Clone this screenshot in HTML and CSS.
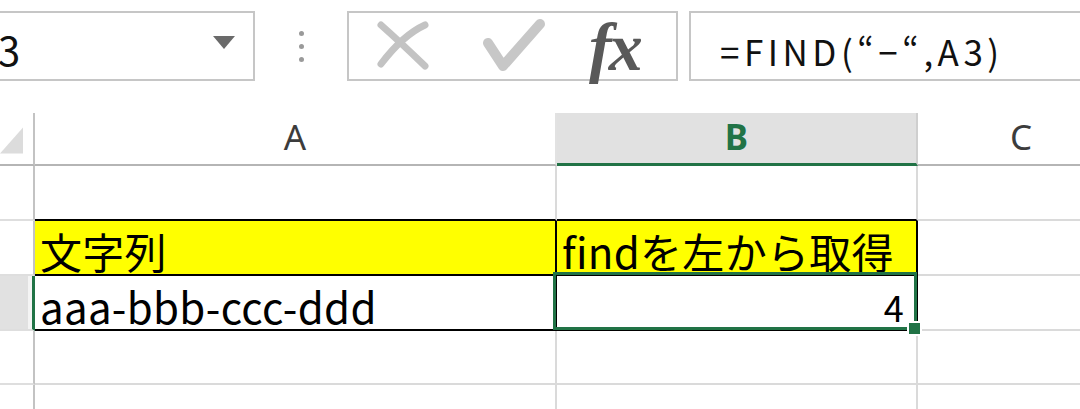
FILE: index.html
```html
<!DOCTYPE html>
<html lang="ja">
<head>
<meta charset="utf-8">
<title>FIND</title>
<link rel="stylesheet" href="styles.css">
</head>
<body>
<div class="topbar">
  <div class="namebox">
    <span class="namebox-text">3</span>
    <svg class="dropdown" width="22" height="13" viewBox="0 0 22 13"><polygon points="0,0 22,0 11,13" fill="#6a6a6a"/></svg>
  </div>
  <div class="dots"><span></span><span></span><span></span></div>
  <div class="buttons">
    <svg class="icon-x" width="56" height="52" viewBox="0 0 56 52">
      <path d="M6 6 Q24 22 50 47" stroke="#c3c3c3" stroke-width="7" stroke-linecap="round" fill="none"/>
      <path d="M50 6 Q28 16 6 45" stroke="#c3c3c3" stroke-width="7" stroke-linecap="round" fill="none"/>
    </svg>
    <svg class="icon-check" width="62" height="56" viewBox="0 0 62 56">
      <path d="M5 25 L20 48 L57 6" stroke="#c7c7c7" stroke-width="10" stroke-linecap="round" stroke-linejoin="round" fill="none"/>
    </svg>
    <span class="fx">fx</span>
  </div>
  <div class="formula">=FIND(“−“,A3)</div>
</div>

<div class="grid">
  <div class="cell corner"><svg width="24" height="27" viewBox="0 0 24 27"><polygon points="24,0 24,27 0,27" fill="#dcdcdc"/></svg></div>
  <div class="cell colhead">A</div>
  <div class="cell colhead selected">B</div>
  <div class="cell colhead">C</div>

  <div class="cell rowhead"></div>
  <div class="cell tb-bottom"></div>
  <div class="cell tb-bottom"></div>
  <div class="cell"></div>

  <div class="cell rowhead"></div>
  <div class="cell yellow tb-right tb-bottom text">文字列</div>
  <div class="cell yellow tb-right tb-bottom text">findを左から取得</div>
  <div class="cell"></div>

  <div class="cell rowhead active"></div>
  <div class="cell tb-right tb-bottom text">aaa-bbb-ccc-ddd</div>
  <div class="cell tb-right tb-bottom text num active-cell">4<span class="handle"></span></div>
  <div class="cell"></div>

  <div class="cell rowhead"></div>
  <div class="cell"></div>
  <div class="cell"></div>
  <div class="cell"></div>

  <div class="cell rowhead"></div>
  <div class="cell"></div>
  <div class="cell"></div>
  <div class="cell"></div>
</div>
</body>
</html>
```
FILE: styles.css
```css
html, body {
  margin: 0;
  padding: 0;
  background: #ffffff;
  overflow: hidden;
  width: 1080px;
  height: 409px;
}

body {
  font-family: "Noto Sans CJK JP", "Noto Sans", sans-serif;
  color: #000;
}

.topbar {
  display: flex;
  align-items: center;
  height: 70px;
  padding-top: 11px;
  padding-bottom: 32px;
}

.namebox {
  box-sizing: border-box;
  width: 265px;
  height: 70px;
  margin-left: -10px;
  border: 2px solid #c6c6c6;
  display: flex;
  align-items: center;
  justify-content: space-between;
  padding-left: 6px;
  padding-right: 18px;
}

.namebox-text {
  font-size: 40px;
  line-height: 1;
  color: #111;
  margin-top: 6px;
}

.dropdown {
  display: block;
  margin-top: -8px;
}

.dots {
  width: 92px;
  height: 70px;
  display: flex;
  flex-direction: column;
  align-items: center;
  justify-content: center;
  gap: 8px;
}

.dots span {
  display: block;
  width: 5px;
  height: 5px;
  border-radius: 50%;
  background: #9a9a9a;
}

.buttons {
  box-sizing: border-box;
  width: 331px;
  height: 70px;
  border: 2px solid #c6c6c6;
  display: flex;
  align-items: center;
  padding-left: 26px;
}

.icon-x {
  display: block;
  margin-top: -2px;
}

.icon-check {
  display: block;
  margin-left: 52px;
}

.fx {
  font-family: "Liberation Serif", "DejaVu Serif", serif;
  font-style: italic;
  font-weight: bold;
  font-size: 68px;
  line-height: 1;
  color: #595959;
  margin-left: 44px;
  margin-top: 2px;
  letter-spacing: -3px;
}

.formula {
  box-sizing: border-box;
  flex: 1;
  height: 70px;
  margin-left: 11px;
  margin-right: -20px;
  border: 2px solid #c6c6c6;
  font-size: 35px;
  line-height: 1;
  padding-left: 29px;
  padding-top: 20px;
  color: #111;
  letter-spacing: 4.5px;
  white-space: nowrap;
}

.grid {
  display: grid;
  width: 1126px;
  grid-template-columns: 35px 522px 361px 208px;
  grid-template-rows: 53px 55px 55px 55px 54px 40px;
}

.cell {
  box-sizing: border-box;
  border-right: 2px solid #dadada;
  border-bottom: 2px solid #dadada;
  position: relative;
}

.corner {
  border-right: 2px solid #c3c3c3;
  border-bottom: 2px solid #b5b5b5;
  display: flex;
  align-items: flex-end;
  justify-content: flex-end;
  padding-right: 10px;
  padding-bottom: 10px;
}

.corner svg {
  display: block;
}

.colhead {
  border-bottom: 2px solid #b5b5b5;
  border-right: 2px solid #e2e2e2;
  font-family: "Noto Sans", "Open Sans", sans-serif;
  font-size: 35px;
  line-height: 1;
  color: #3c3c3c;
  display: flex;
  align-items: center;
  justify-content: center;
  padding-bottom: 4px;
}

.colhead.selected {
  background: #e1e1e1;
  color: #217346;
  font-weight: bold;
  border-bottom: 3px solid #217346;
  border-right: 2px solid #cfcfcf;
}

.rowhead {
  border-right: 2px solid #c3c3c3;
  border-bottom: 2px solid #dedede;
}

.rowhead.active {
  background: #e1e1e1;
  border-right: 3px solid #217346;
  box-shadow: inset -4px 0 0 #f4f4f4;
}

.yellow {
  background: #ffff00;
}

.tb-bottom {
  border-bottom-color: #000;
}

.tb-right {
  border-right-color: #000;
}

.text {
  font-size: 42px;
  line-height: 1;
  display: flex;
  align-items: flex-end;
  padding-left: 5px;
  padding-bottom: 2px;
  white-space: nowrap;
  letter-spacing: 0.3px;
}

.num {
  font-size: 36px;
  justify-content: flex-end;
  padding-right: 12px;
  padding-bottom: 5px;
}

.active-cell::after {
  content: "";
  position: absolute;
  left: -4px;
  top: -4px;
  right: -1px;
  bottom: -1px;
  border: 3px solid #217346;
}

.handle {
  position: absolute;
  right: -6px;
  bottom: -7px;
  width: 11px;
  height: 11px;
  background: #217346;
  border: 2px solid #ffffff;
  z-index: 2;
}
```
